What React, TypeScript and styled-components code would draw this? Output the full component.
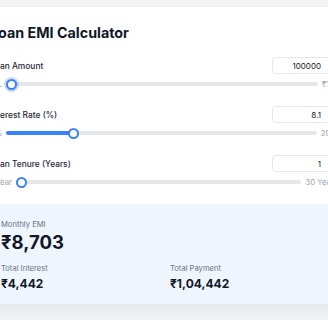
import React, { useState } from "react";
import { styled, createGlobalStyle } from "styled-components";

const GlobalStyle = createGlobalStyle`
  * { box-sizing: border-box; }
  body {
    margin: 0;
    background: #f3f4f6;
    font-family: Inter, "Liberation Sans", sans-serif;
    overflow-x: hidden;
  }
`;

// indian grouping: 1,04,442
function formatINR(n: number) {
  const s = String(Math.round(n));
  if (s.length <= 3) return "₹" + s;
  const last = s.slice(-3);
  const rest = s.slice(0, -3).replace(/\B(?=(\d{2})+(?!\d))/g, ",");
  return "₹" + rest + "," + last;
}

type FieldProps = {
  label: string;
  value: number;
  min: number;
  max: number;
  step: number;
  minLabel: string;
  maxLabel: string;
  autoFocus?: boolean;
  onChange: (v: number) => void;
};

function Field({ label, value, min, max, step, minLabel, maxLabel, autoFocus, onChange }: FieldProps) {
  const fill = ((value - min) / (max - min)) * 100;
  return (
    <FieldBlock>
      <FieldHead>
        <Label>{label}</Label>
        <NumberInput
          type="number"
          value={value}
          min={min}
          max={max}
          step={step}
          onChange={(e) => onChange(Number(e.target.value))}
        />
      </FieldHead>
      <SliderRow>
        <RangeLabel>{minLabel}</RangeLabel>
        <Range
          type="range"
          min={min}
          max={max}
          step={step}
          value={value}
          autoFocus={autoFocus}
          style={{ "--fill": `${fill}%` } as React.CSSProperties}
          onChange={(e) => onChange(Number(e.target.value))}
        />
        <RangeLabel>{maxLabel}</RangeLabel>
      </SliderRow>
    </FieldBlock>
  );
}

function App() {
  const [amount, setAmount] = useState(100000);
  const [rate, setRate] = useState(8.1);
  const [years, setYears] = useState(1);

  const r = rate / 12 / 100;
  const n = years * 12;
  const emi = (amount * r * Math.pow(1 + r, n)) / (Math.pow(1 + r, n) - 1);
  const total = Math.round(emi * n);
  const interest = total - amount;

  return (
    <Page>
      <GlobalStyle />
      <Card>
        <Body>
          <Title>Loan EMI Calculator</Title>
          <Field
            label="Loan Amount"
            value={amount}
            min={100000}
            max={10000000}
            step={10000}
            minLabel="₹1L"
            maxLabel="₹1Cr"
            autoFocus
            onChange={setAmount}
          />
          <Field
            label="Interest Rate (%)"
            value={rate}
            min={5}
            max={20}
            step={0.1}
            minLabel="5%"
            maxLabel="20%"
            onChange={setRate}
          />
          <Field
            label="Loan Tenure (Years)"
            value={years}
            min={1}
            max={30}
            step={1}
            minLabel="1 Year"
            maxLabel="30 Years"
            onChange={setYears}
          />
        </Body>
        <Results>
          <Stat wide>
            <StatLabel>Monthly EMI</StatLabel>
            <BigValue>{formatINR(emi)}</BigValue>
          </Stat>
          <Stat>
            <StatLabel>Total Interest</StatLabel>
            <Value>{formatINR(interest)}</Value>
          </Stat>
          <Stat>
            <StatLabel>Total Payment</StatLabel>
            <Value>{formatINR(total)}</Value>
          </Stat>
        </Results>
      </Card>
    </Page>
  );
}

const Page = styled.div`
  display: flex;
  justify-content: center;
  align-items: flex-start;
  min-height: 100vh;
  padding-top: 7px;
`;

const Card = styled.div`
  flex-shrink: 0;
  width: 380px;
  background: #ffffff;
  border-radius: 10px;
  overflow: hidden;
  box-shadow: 0 8px 16px rgba(0, 0, 0, 0.06);
`;

const Body = styled.div`
  display: flex;
  flex-direction: column;
  padding: 16px 16px 15px;
`;

const Title = styled.h1`
  margin: 0 0 14px;
  font-size: 14.3px;
  line-height: 20px;
  font-weight: 700;
  color: #111827;
`;

const FieldBlock = styled.div`
  display: flex;
  flex-direction: column;
  gap: 3px;
  & + & {
    margin-top: 15px;
  }
`;

const FieldHead = styled.div`
  display: flex;
  justify-content: space-between;
  align-items: center;
`;

const Label = styled.label`
  font-size: 8.4px;
  font-weight: 500;
  color: #1f2937;
`;

const NumberInput = styled.input`
  width: 66px;
  height: 17px;
  padding: 0 16px 0 6px;
  border: 1px solid #e5e7eb;
  border-radius: 4px;
  font-family: inherit;
  font-size: 8px;
  color: #111827;
  text-align: right;
  background: #fff;
  -moz-appearance: textfield;
  &::-webkit-inner-spin-button,
  &::-webkit-outer-spin-button {
    -webkit-appearance: none;
    margin: 0;
  }
`;

const SliderRow = styled.div`
  display: flex;
  align-items: center;
  gap: 4px;
  height: 14px;
`;

const RangeLabel = styled.span`
  font-size: 7.8px;
  color: #9ca3af;
  white-space: nowrap;
`;

const Range = styled.input`
  flex: 1;
  min-width: 0;
  height: 14px;
  margin: 0;
  -webkit-appearance: none;
  appearance: none;
  background: transparent;
  &::-webkit-slider-runnable-track {
    height: 4px;
    border-radius: 2px;
    background: linear-gradient(to right, #3b82f6 var(--fill), #e5e7eb var(--fill));
  }
  &::-webkit-slider-thumb {
    -webkit-appearance: none;
    width: 11px;
    height: 11px;
    margin-top: -3.5px;
    border-radius: 50%;
    background: #ffffff;
    border: 2px solid #3b82f6;
  }
  &:focus {
    outline: none;
  }
  &:focus::-webkit-slider-thumb {
    box-shadow: 0 0 0 2px rgba(59, 130, 246, 0.28);
  }
`;

const Results = styled.div`
  display: grid;
  grid-template-columns: 1fr 1fr;
  column-gap: 12px;
  row-gap: 10px;
  padding: 15px 27px 12px;
  background: #eff6ff;
`;

const Stat = styled.div<{ wide?: boolean }>`
  display: flex;
  flex-direction: column;
  gap: 1px;
  grid-column: ${(p) => (p.wide ? "1 / -1" : "auto")};
`;

const StatLabel = styled.span`
  font-size: 7.6px;
  line-height: 11px;
  color: #6b7280;
`;

const BigValue = styled.span`
  font-size: 18.5px;
  line-height: 22px;
  font-weight: 700;
  color: #111827;
`;

const Value = styled.span`
  font-size: 12px;
  line-height: 16px;
  margin-top: 1px;
  font-weight: 700;
  color: #111827;
`;

export default App;
